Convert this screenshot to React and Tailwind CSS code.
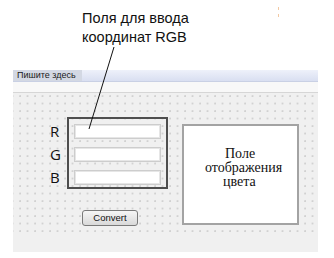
import React from 'react';

// Small form mockup with an annotation callout
const RgbRow = ({ label }) => (
  <div className="h-[15px] leading-[15px] text-[15px] text-[#111]">{label}</div>
);

const InputBox = () => (
  <div className="h-[15px] w-[87px] bg-white border border-[#cdcdcd] shadow-[inset_0_0_0_1px_#e6e6e6]" />
);

export default function App() {
  return (
    <div className="relative w-[334px] h-[258px] bg-white overflow-hidden font-['Liberation_Sans',Arial,sans-serif]">
      {/* Callout caption */}
      <div className="h-[70px] pt-[9px] pl-[82px] text-[14.5px] leading-[19px] text-[#111]">
        <div>Поля для ввода</div>
        <div>координат RGB</div>
      </div>

      {/* Designer form */}
      <div className="ml-[13px] w-[305px] h-[182px] bg-[#f0f0f0] flex flex-col">
        {/* Menu strip */}
        <div className="h-[12px] flex bg-gradient-to-b from-[#eef1fa] to-[#d9dff1] border-b border-[#c9d0e4]">
          <div className="w-[69px] bg-[#d3d8e3] pl-[4px] text-[9px] leading-[11px] text-[#1a1a1a]">
            Пишите здесь
          </div>
        </div>
        <div className="h-[11px] bg-[#f8f8f8] border-b border-[#d6d6d6]" />

        {/* Dotted canvas */}
        <div className="h-[143px] flex items-start bg-[radial-gradient(circle_at_1px_1px,#cacaca_0.6px,transparent_0.9px)] bg-[size:7.5px_7.5px] bg-[position:6px_2px]">
          <div className="flex flex-col">
            <div className="flex mt-[24px] ml-[37px]">
              <div className="w-[17px] flex flex-col gap-[8px] pt-[7px] font-['Open_Sans',sans-serif]">
                <RgbRow label="R" />
                <RgbRow label="G" />
                <RgbRow label="B" />
              </div>
              <div className="w-[101px] h-[72px] border-2 border-[#4e4e4e] pt-[5px] pl-[5px] flex flex-col gap-[8px]">
                <InputBox />
                <InputBox />
                <InputBox />
              </div>
            </div>
            <button className="mt-[21px] ml-[69px] w-[56px] h-[16px] rounded-[3px] border border-[#7a7a7a] bg-gradient-to-b from-[#f6f6f6] to-[#d9d9d9] text-[9.5px] leading-[14px] text-[#111]">
              Convert
            </button>
          </div>

          <div className="ml-[14px] mt-[31px] w-[117px] h-[101px] bg-white border-2 border-[#a3a3a3] pt-[21px] flex flex-col font-['Liberation_Serif','Times_New_Roman',serif] text-[14px] leading-[14px] text-[#111]">
            <div className="pl-[41px]">Поле</div>
            <div className="pl-[21px]">отображения</div>
            <div className="pl-[39px]">цвета</div>
          </div>
        </div>
        <div className="h-[16px]" />
      </div>

      {/* Leader line of the callout */}
      <svg className="absolute left-0 top-0 pointer-events-none" width="334" height="258">
        <line x1="114" y1="47" x2="89" y2="129" stroke="#111" strokeWidth="1" />
      </svg>

      {/* faint marks near top right */}
      <div className="absolute left-[278px] top-[7px] w-[1px] h-[3px] bg-[#f2c9a3]" />
      <div className="absolute left-[278px] top-[14px] w-[1px] h-[3px] bg-[#f2c9a3]" />
    </div>
  );
}
